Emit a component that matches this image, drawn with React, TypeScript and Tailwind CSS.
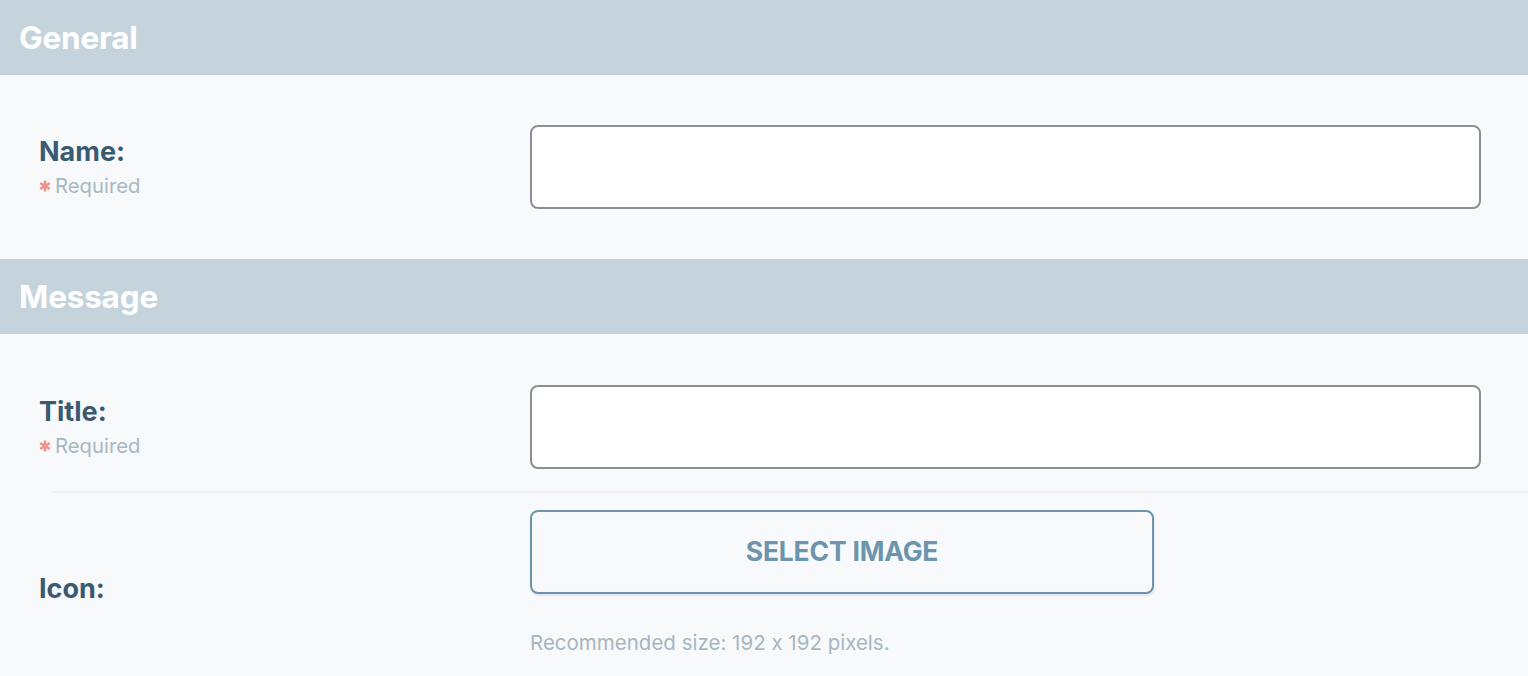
import React from 'react'

const font = { fontFamily: 'Inter, "Noto Sans", sans-serif', fontFeatureSettings: '"calt" 0' }

function SectionHeader({ title }: { title: string }) {
  return (
    <div className="flex h-[75px] items-center bg-[#c5d3dc] pl-[19px]">
      <h2 className="text-[31.5px] font-bold leading-none tracking-[-0.2px] text-white">{title}</h2>
    </div>
  )
}

function Asterisk() {
  return (
    <svg width="12" height="12" viewBox="0 0 12 12" className="mr-[4px] shrink-0">
      <g stroke="#f0938c" strokeWidth="2.6" strokeLinecap="butt">
        <line x1="6" y1="0.5" x2="6" y2="11.5" />
        <line x1="1.2" y1="3.2" x2="10.8" y2="8.8" />
        <line x1="1.2" y1="8.8" x2="10.8" y2="3.2" />
      </g>
    </svg>
  )
}

function Label({ text, required }: { text: string; required?: boolean }) {
  return (
    <div className="w-[491px] shrink-0">
      <p className="text-[27px] font-bold leading-[32px] text-[#3a5a72]">{text}</p>
      {required && (
        <p className="mt-[6px] flex items-center text-[20.3px] leading-6 text-[#a9b8c2]">
          <Asterisk />Required
        </p>
      )}
    </div>
  )
}

function TextInput() {
  return (
    <input
      type="text"
      className="h-[84px] flex-1 rounded-[8px] border-2 border-[#8b8e93] bg-white px-4 text-xl outline-none"
    />
  )
}

export default function App() {
  return (
    <div className="min-h-screen bg-[#f7f9fb]" style={font}>
      <SectionHeader title="General" />
      <div className="flex items-center pb-[50px] pl-[39px] pr-[47px] pt-[50px]">
        <Label text="Name:" required />
        <TextInput />
      </div>

      <SectionHeader title="Message" />
      <div className="flex items-center pb-[22px] pl-[39px] pr-[47px] pt-[51px]">
        <Label text="Title:" required />
        <TextInput />
      </div>
      <div className="ml-[52px] h-[2px] bg-[#edf0f2]" />
      <div className="flex items-center pl-[39px] pt-[17px]">
        <div className="pt-[12px]">
          <Label text="Icon:" />
        </div>
        <div className="flex flex-col">
          <button className="h-[84px] w-[624px] rounded-[8px] border-2 border-[#6c95ad] bg-[#f7f9fb] text-[26.5px] font-bold tracking-[-0.2px] text-[#6c95ad] shadow-[1px_2px_2px_rgba(0,0,0,0.08)]">
            SELECT IMAGE
          </button>
          <p className="mt-[37px] text-[20.5px] leading-6 text-[#a9b6bf]">Recommended size: 192 x 192 pixels.</p>
        </div>
      </div>
    </div>
  )
}
